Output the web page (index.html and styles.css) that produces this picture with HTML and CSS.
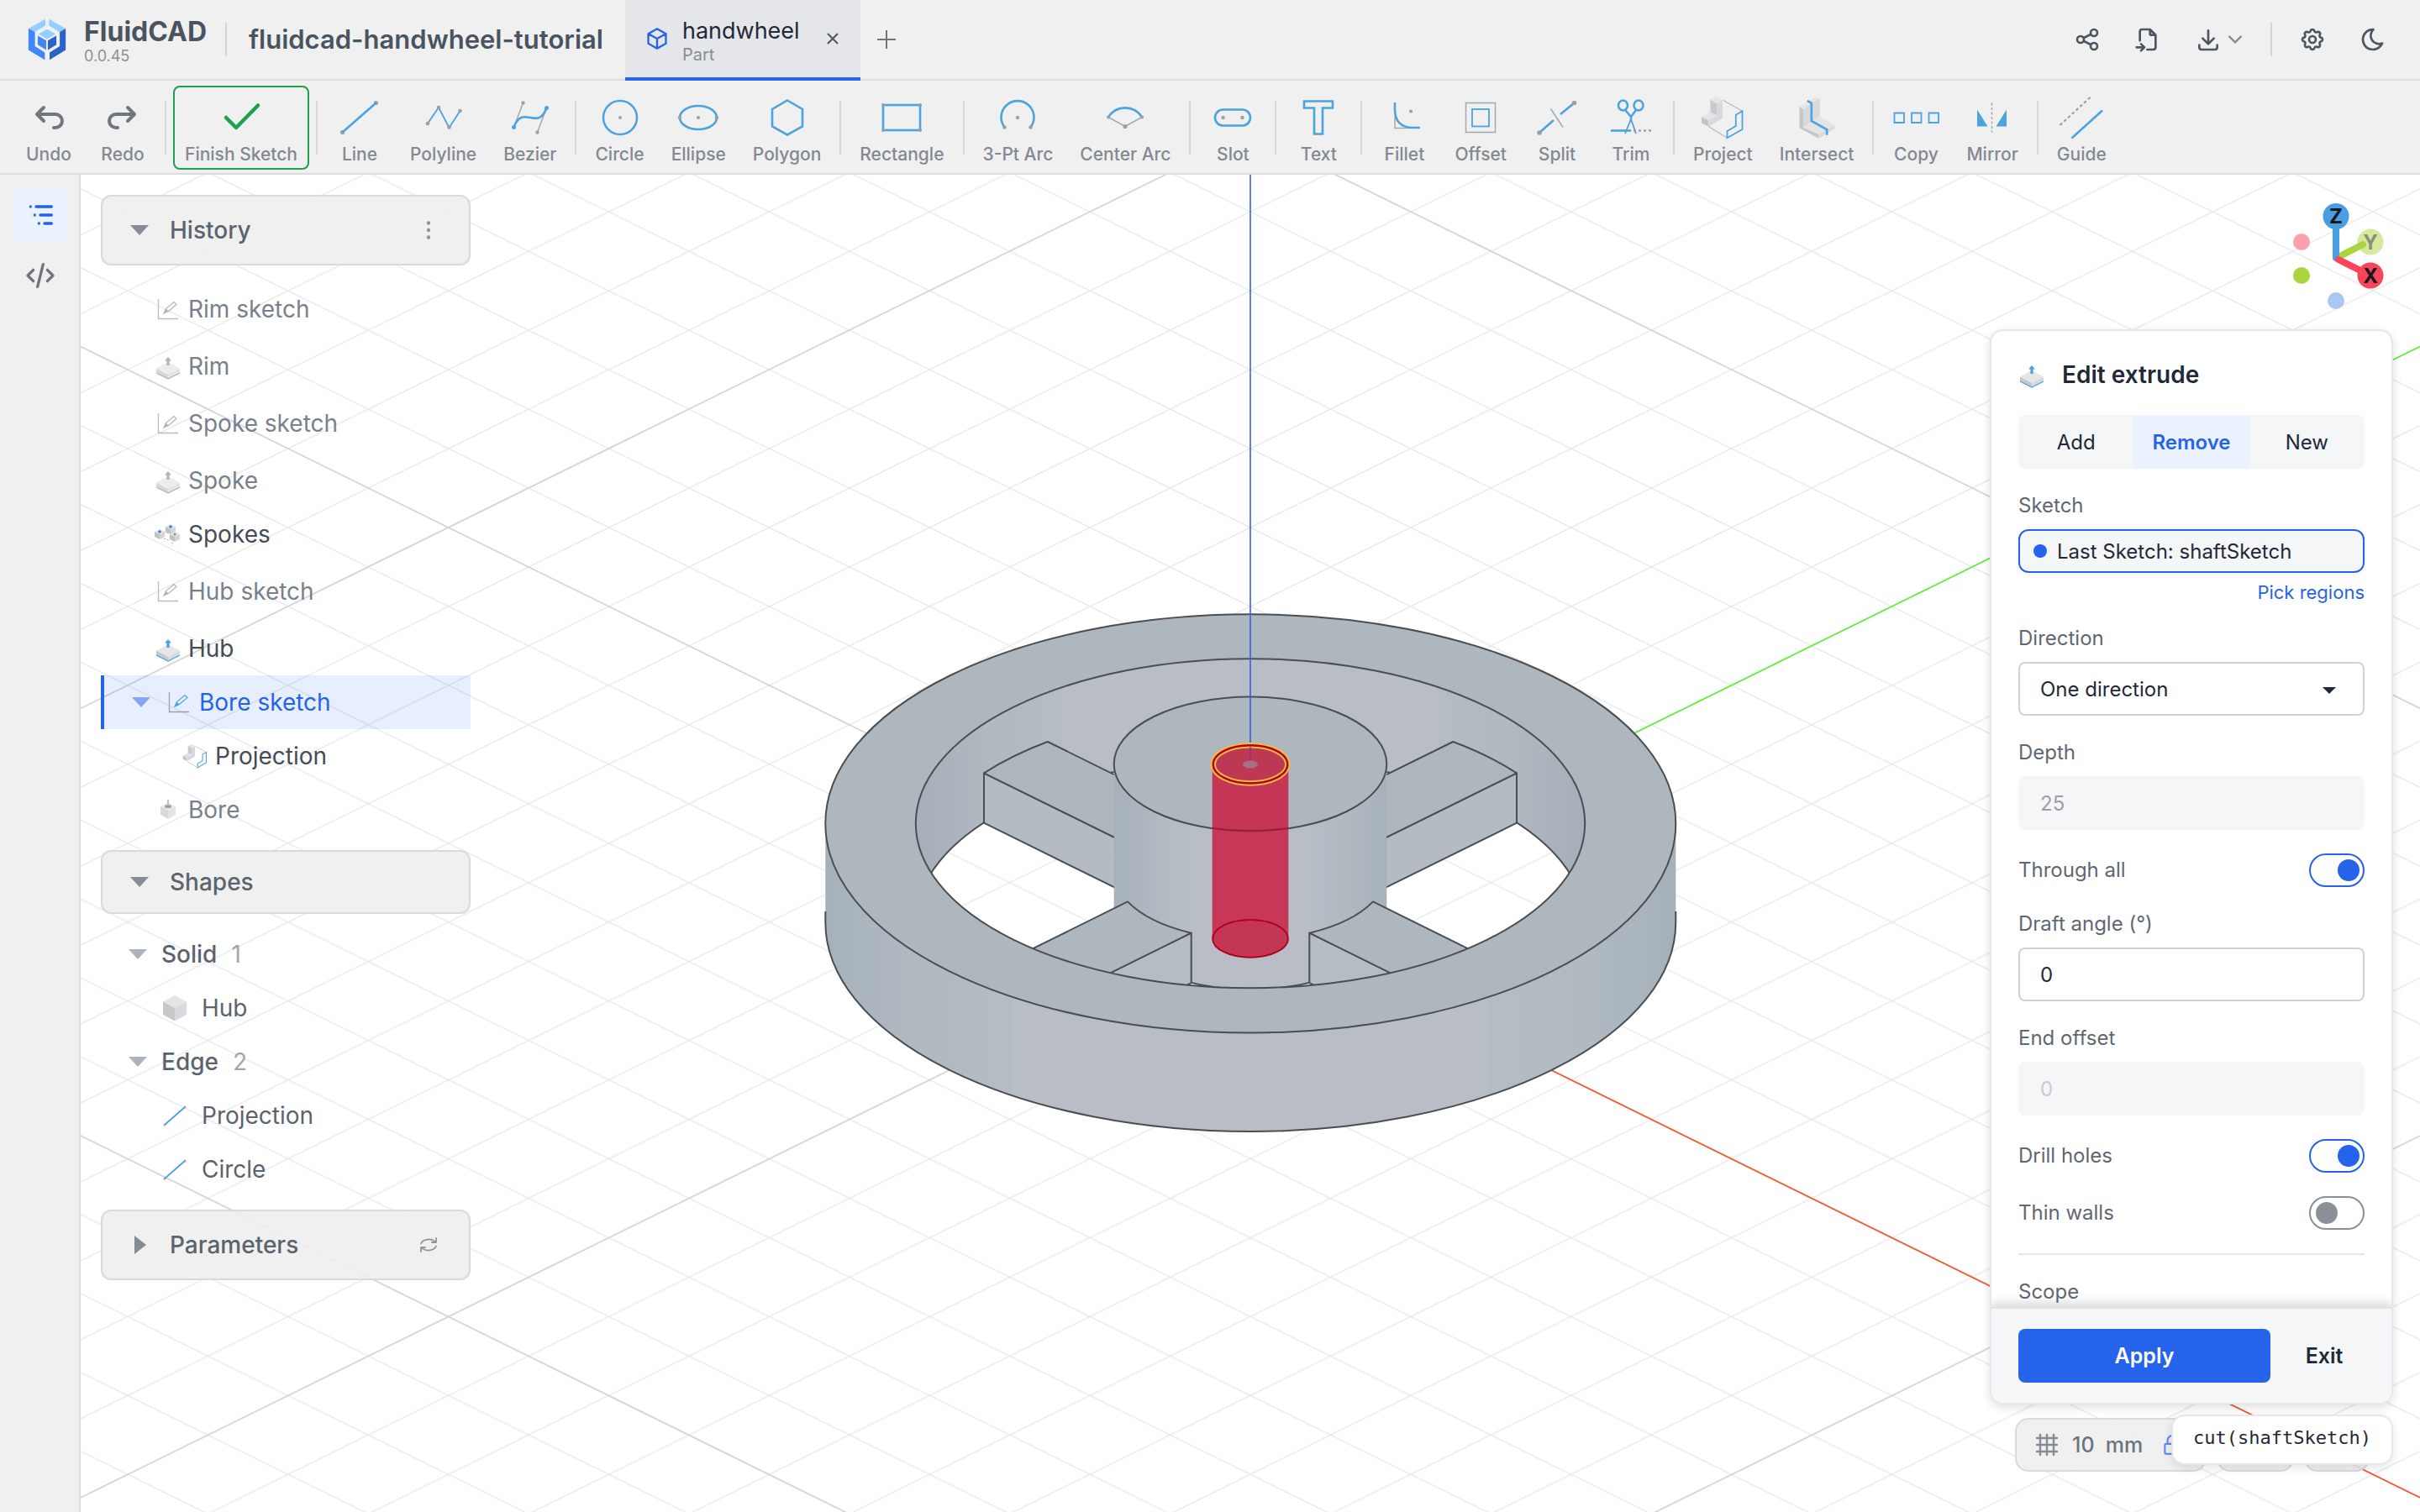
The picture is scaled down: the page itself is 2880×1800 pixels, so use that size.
FILE: index.html
```html
<!DOCTYPE html>
<html lang="en">
<head>
<meta charset="utf-8">
<title>FluidCAD - handwheel</title>
<link rel="stylesheet" href="styles.css">
</head>
<body>
<svg class="sprite" aria-hidden="true">
  <symbol id="i-extrude" viewBox="0 0 32 32">
    <path d="M2 18.500 16 11l14 7.500L16 26z" fill="#e6e6e7"/>
    <path d="M2 18.500 16 26v5L2 24z" fill="#c6c8c9"/>
    <path d="M30 18.500 16 26v5l14-7z" fill="#d9dadd"/>
    <path d="M2 24l14 7 14-7" fill="none" stroke="#4ba3e0" stroke-width="1.300"/>
    <path d="M16 5l4 4.500h-2.400V15h-3.200V9.500H12z" fill="#4ba3e0"/>
  </symbol>
  <symbol id="i-sketch" viewBox="0 0 32 32">
    <path d="M4.500 4v23.500H28" fill="none" stroke="#9aa0a8" stroke-width="1.300"/>
    <path d="M11 21l2.500-5.500 9.500-8 3 3-9.500 8z" fill="none" stroke="#4ba3e0" stroke-width="1.200"/>
    <path d="M11 21l2.500-5.500 3 3z" fill="#4ba3e0"/>
  </symbol>
  <symbol id="i-minicube" viewBox="0 0 12 14">
    <path d="M0 4l6-3 6 3-6 3z" fill="#e3e4e6"/><path d="M0 4l6 3v6l-6-3z" fill="#bfc2c5"/><path d="M12 4 6 7v6l6-3z" fill="#d3d5d8"/>
  </symbol>
  <symbol id="i-project" viewBox="0 0 56 56">
    <path d="M13.500 6.500 21 3l7 4.300-7 4z" fill="#e6e6e7"/>
    <path d="M13.500 6.500 21 11.300v14L13.500 22z" fill="#c8cacb"/>
    <path d="M3 27.300 13.500 21.500 21 25.300 11.500 31.500z" fill="#e3e4e5"/>
    <path d="M3 27.300 11.500 31.500v7.200L3 34.600z" fill="#c3c6c6"/>
    <path d="M28 7.300v21.400L11.500 38.700v-7.200L21 25.300v-14z" fill="#d8d9dc"/>
    <path d="M28.500 7.300l23 13M11.500 38.700l22 13.600" fill="none" stroke="#b5b8bc" stroke-width="1.200"/>
    <path d="M51.500 20.300V42l-18 10.300V44l10.300-6V24.700z" fill="none" stroke="#4ba3e0" stroke-width="1.800"/>
  </symbol>
  <symbol id="i-cube" viewBox="0 0 32 32">
    <path d="M2 8.500 16 1l14 7.500L16 16z" fill="#e3e4e5"/><path d="M2 8.500 16 16v15.500L2 24z" fill="#c6c8c9"/><path d="M30 8.500 16 16v15.500L30 24z" fill="#d9dadf"/>
  </symbol>
  <symbol id="i-edge" viewBox="0 0 32 32">
    <path d="M4 27 28 6" stroke="#4ba3e0" stroke-width="1.800"/><circle cx="4" cy="27" r="1.500" fill="#98a0aa"/><circle cx="28" cy="6" r="1.500" fill="#98a0aa"/>
  </symbol>
  <symbol id="i-down" viewBox="0 0 22 14"><path d="M0 1h22L11 13z" fill="currentColor"/></symbol>
</svg>

<header class="topbar">
  <a class="brand" href="#">
    <svg class="brand__logo" viewBox="100 69 136 149" aria-hidden="true">
      <path d="M162 71v23l-37 23-23-12zM175 71v23l37 23 22-12z" fill="#93ceff"/>
      <path d="M102 105l23 12v50l35 23v26l-58-35z" fill="#3f85fb"/>
      <path d="M234 105l-21 12v50l-36 23v26l57-35z" fill="#2763c8"/>
      <path d="M168 107l30 17-30 18-30-18z" fill="#93ceff"/>
      <path d="M135 130l30 17v34l-30-19z" fill="#3f85fb"/><path d="M201 130l-30 17v34l30-19z" fill="#2763c8"/>
    </svg>
    <span class="brand__text"><strong class="brand__name">FluidCAD</strong><span class="brand__version">0.0.45</span></span>
  </a>
  <span class="rule"></span>
  <h1 class="project">fluidcad-handwheel-tutorial</h1>
  <div class="tab">
    <svg class="tab__icon" viewBox="0 0 24 24" fill="none" stroke="currentColor" stroke-width="2" stroke-linejoin="round" stroke-linecap="round"><path d="M12 2l9 5v10l-9 5-9-5V7zM12 12l9-5M12 12v10M12 12L3 7"/></svg>
    <span class="tab__text"><span class="tab__name">handwheel</span><span class="tab__kind">Part</span></span>
    <button class="tab__close" aria-label="Close tab"><svg viewBox="0 0 14 14" fill="none" stroke="currentColor" stroke-width="2"><path d="M1 1l12 12M13 1L1 13"/></svg></button>
  </div>
  <button class="newtab" aria-label="New tab"><svg viewBox="0 0 22 22" fill="none" stroke="currentColor" stroke-width="2"><path d="M11 0v22M0 11h22"/></svg></button>
  <div class="actions">
    <button class="iconbtn" aria-label="Share"><svg viewBox="0 0 24 24"><path d="M3 12a3 3 0 1 0 6 0a3 3 0 1 0-6 0M15 6a3 3 0 1 0 6 0a3 3 0 1 0-6 0M15 18a3 3 0 1 0 6 0a3 3 0 1 0-6 0M8.700 10.700l6.600-3.400M8.700 13.300l6.600 3.400"/></svg></button>
    <button class="iconbtn" aria-label="Import"><svg viewBox="0 0 24 24"><path d="M14 3v4a1 1 0 0 0 1 1h4M5 13V5a2 2 0 0 1 2-2h7l5 5v11a2 2 0 0 1-2 2h-5.500M2 19h7M6 16l3 3-3 3"/></svg></button>
    <button class="iconbtn iconbtn--wide" aria-label="Export"><svg viewBox="0 0 24 24"><path d="M4 17v2a2 2 0 0 0 2 2h12a2 2 0 0 0 2-2v-2M7 11l5 5 5-5M12 4v12"/></svg><svg class="chev" viewBox="0 0 14 14"><path d="M1 4l6 6 6-6"/></svg></button>
    <span class="rule"></span>
    <button class="iconbtn" aria-label="Settings"><svg viewBox="0 0 24 24"><path d="M10.325 4.317c.426-1.756 2.924-1.756 3.350 0a1.724 1.724 0 0 0 2.573 1.066c1.543-.94 3.310.826 2.370 2.370a1.724 1.724 0 0 0 1.065 2.572c1.756.426 1.756 2.924 0 3.350a1.724 1.724 0 0 0-1.066 2.573c.94 1.543-.826 3.310-2.370 2.370a1.724 1.724 0 0 0-2.572 1.065c-.426 1.756-2.924 1.756-3.350 0a1.724 1.724 0 0 0-2.573-1.066c-1.543.94-3.310-.826-2.370-2.370a1.724 1.724 0 0 0-1.065-2.572c-1.756-.426-1.756-2.924 0-3.350a1.724 1.724 0 0 0 1.066-2.573c-.94-1.543.826-3.310 2.370-2.370c1 .608 2.296.07 2.572-1.065z"/><circle cx="12" cy="12" r="3"/></svg></button>
    <button class="iconbtn" aria-label="Dark mode"><svg viewBox="0 0 24 24"><path d="M12 3c.132 0 .263 0 .393 0a7.500 7.500 0 0 0 7.920 12.446a9 9 0 1 1-8.313-12.454z"/></svg></button>
  </div>
</header>

<nav class="toolbar" aria-label="Sketch tools">
  <button class="tool tool--plain"><svg viewBox="0 0 28 28"><g transform="translate(2 2)"><path d="M9 14l-4-4 4-4M5 10h11a4 4 0 1 1 0 8h-1"/></g></svg>Undo</button>
  <button class="tool tool--plain"><svg viewBox="0 0 28 28"><g transform="translate(2 2)"><path d="M15 14l4-4-4-4M19 10H8a4 4 0 1 0 0 8h1"/></g></svg>Redo</button>
  <span class="toolbar__sep"></span>
  <button class="tool tool--finish"><svg viewBox="0 0 56 56"><path d="M10 28l12 12 26-26.500" fill="none" stroke="#1aa34a" stroke-width="4.500" stroke-linecap="round" stroke-linejoin="round"/></svg>Finish Sketch</button>
  <span class="toolbar__sep"></span>
  <button class="tool"><svg viewBox="0 0 56 56"><g class="dots"><circle cx="7.500" cy="45.500" r="2.600"/><circle cx="47.500" cy="10.500" r="2.600"/></g><path class="b" d="M7.500 45.500l40-35"/></svg>Line</button>
  <button class="tool"><svg viewBox="0 0 56 56"><path class="b thin" d="M9 35l13-19 12.500 24L47.500 20"/><g class="dots"><circle cx="9" cy="35" r="2.300"/><circle cx="22" cy="16" r="2.300"/><circle cx="34.500" cy="39.500" r="2.300"/><circle cx="47.500" cy="20" r="2.300"/></g></svg>Polyline</button>
  <button class="tool"><svg viewBox="0 0 56 56"><path class="g" d="M8.500 39.500l11-29M36.500 45.500l11-29"/><path class="b" d="M8.500 39.500C19.500 10.500 36.500 45.500 47.500 16.500"/><g class="dots"><circle cx="19.500" cy="10.500" r="2.200"/><circle cx="36.500" cy="45.500" r="2.200"/></g><circle cx="8.500" cy="39.500" r="2.500" fill="#4ba3e0"/><circle cx="47.500" cy="16.500" r="2.500" fill="#4ba3e0"/></svg>Bezier</button>
  <span class="toolbar__sep"></span>
  <button class="tool"><svg viewBox="0 0 56 56"><circle class="b" cx="28" cy="28" r="20"/><g class="dots"><circle cx="28" cy="28" r="2"/></g></svg>Circle</button>
  <button class="tool"><svg viewBox="0 0 56 56"><ellipse class="b" cx="28" cy="28" rx="22" ry="14"/><g class="dots"><circle cx="28" cy="28" r="2"/><circle cx="6" cy="28" r="2.300"/><circle cx="50" cy="28" r="2.300"/></g></svg>Ellipse</button>
  <button class="tool"><svg viewBox="0 0 56 56"><path class="b" d="M28 7.500l18 10.500v20.500L28 48.500 10 38.500V18z"/></svg>Polygon</button>
  <span class="toolbar__sep"></span>
  <button class="tool"><svg viewBox="0 0 56 56"><rect class="b" x="6" y="13" width="44" height="30"/><g class="dots"><circle cx="6" cy="13" r="2"/><circle cx="50" cy="13" r="2"/><circle cx="6" cy="43" r="2"/><circle cx="50" cy="43" r="2"/></g></svg>Rectangle</button>
  <span class="toolbar__sep"></span>
  <button class="tool"><svg viewBox="0 0 56 56"><path class="b" d="M12.500 39.500a19.500 19.500 0 1 1 31 0"/><g class="dots"><circle cx="28" cy="28" r="2.200"/><circle cx="12.500" cy="39.500" r="2.200"/><circle cx="43.500" cy="39.500" r="2.200"/></g></svg>3-Pt Arc</button>
  <button class="tool"><svg viewBox="0 0 56 56"><path class="g" d="M8 27.500l20 11 20-11"/><path class="b" d="M8 27.500a23.500 23.500 0 0 1 40 0"/><g class="dots"><circle cx="28" cy="38.500" r="2.600"/><circle cx="8" cy="27.500" r="2"/><circle cx="48" cy="27.500" r="2"/></g></svg>Center Arc</button>
  <span class="toolbar__sep"></span>
  <button class="tool"><svg viewBox="0 0 56 56"><rect class="b" x="7" y="18.500" width="42" height="19" rx="9.500"/><g class="dots"><circle cx="16.500" cy="28" r="2.200"/><circle cx="39.500" cy="28" r="2.200"/></g></svg>Slot</button>
  <span class="toolbar__sep"></span>
  <button class="tool"><svg viewBox="0 0 56 56"><path class="b" d="M11 8.500h34v8H33v31H23v-31H11z"/></svg>Text</button>
  <span class="toolbar__sep"></span>
  <button class="tool"><svg viewBox="0 0 56 56"><path class="g" d="M17 26v14.500h18"/><path class="b" d="M17 10v8q0 22 22 22h8"/><g class="dots"><circle cx="36" cy="20.500" r="2"/></g></svg>Fillet</button>
  <button class="tool"><svg viewBox="0 0 56 56"><rect class="g" x="10.500" y="10.500" width="35" height="35"/><rect class="b thin" x="18" y="18" width="20" height="20.500"/></svg>Offset</button>
  <button class="tool"><svg viewBox="0 0 56 56"><path class="g" d="M20.500 17.500l14.500 22"/><path class="b" d="M7 46l17-15M32 24l16-13"/><g class="dots"><circle cx="7" cy="46" r="2.800"/><circle cx="48.500" cy="10.500" r="2.800"/></g></svg>Split</button>
  <button class="tool"><svg viewBox="0 0 56 56"><ellipse class="b" cx="18.500" cy="13.500" rx="5.500" ry="6"/><ellipse class="b" cx="37" cy="13.500" rx="5.500" ry="6"/><path class="b" d="M21 19l7 8 6-8M28 26v6"/><path class="b thin" d="M28 30l-7 17M28 30l6 17"/><path class="b" d="M4 43.500h24"/><path d="M31 43.500h22" stroke="#98a0aa" stroke-width="2.400" stroke-dasharray="3 3"/></svg>Trim</button>
  <span class="toolbar__sep"></span>
  <button class="tool"><svg viewBox="0 0 56 56"><use href="#i-project"/></svg>Project</button>
  <button class="tool"><svg viewBox="0 0 56 56"><path d="M7.500 14.700 26.800 3l5 2.300L11.800 18z" fill="#e6e6e7"/><path d="M11.800 18l20-12.700v21L11.800 39.700z" fill="#d8d9dc"/><path d="M11.800 39.700l20-13.400 17.700 11L30.200 48z" fill="#e3e4e5"/><path d="M7.500 14.700 11.800 18v21.700L30.200 48v4.700L7.500 40.300z" fill="#c3c6c6"/><path d="M30.200 48l19.300-10.700v4L30.200 52.700z" fill="#d8d9dc"/><path class="b" d="M16.800 8l5 2.700V32l18.400 10.300v6.400"/></svg>Intersect</button>
  <span class="toolbar__sep"></span>
  <button class="tool"><svg viewBox="0 0 56 56"><path class="b thin" d="M2.500 22.500h11.500V34H2.500zM23 22.500h11.500V34H23zM43.500 22.500H55V34H43.500z"/></svg>Copy</button>
  <button class="tool"><svg viewBox="0 0 56 56"><path d="M10 18.500v20h12.500zM45 18.500v20H32.500z" fill="#4ba3e0"/><path class="g" d="M27.500 10.500v35" stroke-dasharray="3 2.500"/></svg>Mirror</button>
  <span class="toolbar__sep"></span>
  <button class="tool"><svg viewBox="0 0 56 56"><path d="M2.500 37 39.500 3" fill="none" stroke="#98a0aa" stroke-width="2.200" stroke-dasharray="3.500 3"/><path class="b" d="M16.500 52.500 53 19.500"/></svg>Guide</button>
</nav>

<main class="workspace">
  <nav class="rail" aria-label="Panels">
    <button class="rail__btn rail__btn--on" aria-label="Model tree"><svg viewBox="0 0 24 24"><path d="M9 6h11M12 12h8M15 18h5M5 6v.01M8 12v.01M11 18v.01"/></svg></button>
    <button class="rail__btn" aria-label="Code"><svg viewBox="0 0 24 24"><path d="M7 8l-4 4 4 4M17 8l4 4-4 4M14 4l-4 16"/></svg></button>
  </nav>

  <section class="stage" aria-label="3D view">
    <svg class="scene" viewBox="96 208 2784 1592" preserveAspectRatio="xMidYMid slice">
      <defs>
        <pattern id="grid" patternUnits="userSpaceOnUse" x="1488" y="1097.700" width="190.860" height="93.940">
          <path d="M-19.086-9.394 209.946 103.334M-19.086 103.334 209.946-9.394M171.774-9.394 209.946 9.394M-19.086 84.546 19.086 103.334M-19.086 9.394 19.086-9.394M171.774 103.334 209.946 84.546" stroke="#e9e9ea" stroke-width="1.500" fill="none"/>
        </pattern>
        <linearGradient id="outer" gradientUnits="userSpaceOnUse" x1="982" x2="1994" y1="0" y2="0">
          <stop offset="0" stop-color="#a5b0ba"/><stop offset=".04" stop-color="#abb5bd"/><stop offset=".1" stop-color="#b0b8c0"/><stop offset=".22" stop-color="#b5bcc4"/><stop offset=".22" stop-color="#b9bdc6"/><stop offset=".78" stop-color="#b9bdc6"/><stop offset=".78" stop-color="#b5bdc4"/><stop offset=".9" stop-color="#b2bac1"/><stop offset=".92" stop-color="#adb7bf"/><stop offset="1" stop-color="#a5b0ba"/>
        </linearGradient>
        <linearGradient id="inner" gradientUnits="userSpaceOnUse" x1="1090" x2="1886" y1="0" y2="0">
          <stop offset="0" stop-color="#a5afb9"/><stop offset=".1" stop-color="#b0b8c0"/><stop offset=".22" stop-color="#b5bcc4"/><stop offset=".22" stop-color="#b9bdc6"/><stop offset=".78" stop-color="#b9bdc6"/><stop offset=".78" stop-color="#b5bdc4"/><stop offset=".9" stop-color="#b0b8c0"/><stop offset="1" stop-color="#a5afb9"/>
        </linearGradient>
        <linearGradient id="hub" gradientUnits="userSpaceOnUse" x1="1326" x2="1650" y1="0" y2="0">
          <stop offset="0" stop-color="#a7b1ba"/><stop offset=".2" stop-color="#b3bbc3"/><stop offset=".3" stop-color="#b8bdc6"/><stop offset=".7" stop-color="#b8bdc6"/><stop offset=".85" stop-color="#b1b9c1"/><stop offset="1" stop-color="#a7b1ba"/>
        </linearGradient>
        <clipPath id="opening"><ellipse cx="1488" cy="980.200" rx="398.200" ry="196"/></clipPath>
      </defs>
      <rect x="96" y="208" width="2784" height="1592" fill="#fff"/>
      <rect x="96" y="208" width="2784" height="1592" fill="url(#grid)"/>
      <g stroke="#d4d5d6" stroke-width="1.600" fill="none">
        <path d="M96 412.500 1488 1097.700 68 1796.700"/>
        <path d="M96 843.300 1693 57.200M1386 107.800 2880 843.200M1488 2037.400 2880 1352.200M1488 2037.400 0 1304.900"/>
      </g>
      <path d="M1488 1097.700 2912 1798.600" stroke="#f2592f" stroke-width="1.800"/>
      <path d="M1488 1097.700 2880 412.500" stroke="#62f03a" stroke-width="1.800"/>

      <g stroke="#4b4e51" stroke-width="2" stroke-linejoin="round">
        <path d="M982.300 980.400v117.500a506 249.100 0 0 0 1012 0V980.400z" fill="url(#outer)" stroke="none"/>
        <path d="M982.300 1085v12.900a506 249.100 0 0 0 1012 0V1085" fill="none"/>
        <ellipse cx="1488.300" cy="980.400" rx="506" ry="249.100" fill="#afb7be"/>
        <g clip-path="url(#opening)">
          <rect x="1080" y="770" width="820" height="420" fill="url(#inner)" stroke="none"/>
          <ellipse cx="1488" cy="1098" rx="398.200" ry="196" fill="#fff"/>
          <ellipse cx="1488" cy="1098" rx="397" ry="195" fill="url(#grid)" stroke="none"/>
          <path d="M1171 920.300v59.400L1400 1092.700V1033.300z" fill="#b4bbc2"/>
          <path d="M1171 920.300Q1204 899 1246.700 883L1400 958.600v74.700z" fill="#afb7be"/>
          <path d="M1805 920.300v59.400L1576 1092.700V1033.300z" fill="#b4bbc2"/>
          <path d="M1805 920.300Q1772 899 1729.300 883L1576 958.600v74.700z" fill="#afb7be"/>
          <path d="M1325.700 909.500V1098a162.300 79.900 0 0 0 324.600 0V909.500z" fill="url(#hub)" stroke="none"/>
          <path d="M1325.700 1098a162.300 79.900 0 0 0 324.600 0" fill="none"/>
          <path d="M1417.700 1110.700v59.400L1290 1233V1173z" fill="#b6bcc4"/>
          <path d="M1342 1073.400A162.300 79.900 0 0 0 1417.700 1110.700L1290 1173.800 1180 1153.500z" fill="#afb7be"/>
          <path d="M1558.300 1110.700v59.400L1686 1233V1173z" fill="#b6bcc4"/>
          <path d="M1634 1073.400A162.300 79.900 0 0 1 1558.300 1110.700L1686 1173.800 1796 1153.500z" fill="#afb7be"/>
        </g>
        <ellipse cx="1488" cy="980.200" rx="398.200" ry="196" fill="none"/>
        <ellipse cx="1488" cy="909.500" rx="162.300" ry="79.900" fill="#afb7be"/>
      </g>
      <path d="M1488 208v702" stroke="#3f5bea" stroke-width="1.600"/>
      <path d="M1442.700 909.900v207.500a45.300 22.300 0 0 0 90.600 0V909.900z" fill="#c91a40" fill-opacity=".82"/>
      <ellipse cx="1488" cy="909.900" rx="45.300" ry="22.300" fill="#bd3853"/>
      <path d="M1443 986q45 6 90 0" fill="none" stroke="#8f2036" stroke-width="1.600"/>
      <ellipse cx="1488" cy="1117.400" rx="44.800" ry="22.300" fill="#c33754" stroke="#b3001f" stroke-width="2"/>
      <ellipse cx="1488" cy="909.900" rx="44.300" ry="22.600" fill="none" stroke="#edbb3e" stroke-width="6.500"/>
      <ellipse cx="1488" cy="909.900" rx="44.300" ry="22.600" fill="none" stroke="#b3001f" stroke-width="2.400"/>
      <path d="M1488 888v22" stroke="#7c3a8f" stroke-width="1.400"/>
      <ellipse cx="1488" cy="910" rx="9" ry="4.500" fill="#a87086"/>
    </svg>

    <div class="overlay">
      <aside class="side">
        <h2 class="panelhead"><svg class="caret"><use href="#i-down"/></svg>History<button class="panelhead__btn" aria-label="History menu"><svg viewBox="0 0 24 24" fill="currentColor"><circle cx="12" cy="3.500" r="2.200"/><circle cx="12" cy="12" r="2.200"/><circle cx="12" cy="20.500" r="2.200"/></svg></button></h2>
        <ul class="tree tree--history">
          <li class="row row--dim row--spaced"><svg class="ico"><use href="#i-sketch"/></svg>Rim sketch</li>
          <li class="row row--dim row--spaced"><svg class="ico"><use href="#i-extrude"/></svg>Rim</li>
          <li class="row row--dim row--spaced"><svg class="ico"><use href="#i-sketch"/></svg>Spoke sketch</li>
          <li class="row row--dim"><svg class="ico"><use href="#i-extrude"/></svg>Spoke</li>
          <li class="row row--spaced"><svg class="ico" viewBox="0 0 32 32"><path d="M7 12l14 4v14M7 20l10 3 6-6" fill="none" stroke="#a5aab0" stroke-width="1" stroke-dasharray="2 2"/><use href="#i-minicube" x="0" y="9" width="12" height="14"/><use href="#i-minicube" x="13" y="3" width="12" height="14"/><use href="#i-minicube" x="18" y="12" width="12" height="14"/><circle cx="6" cy="13" r="1.800" fill="#3f7fd0"/><circle cx="19" cy="7" r="1.800" fill="#3f7fd0"/><circle cx="24" cy="16" r="1.500" fill="#8c9299"/></svg>Spokes</li>
          <li class="row row--dim row--spaced"><svg class="ico"><use href="#i-sketch"/></svg>Hub sketch</li>
          <li class="row"><svg class="ico"><use href="#i-extrude"/></svg>Hub</li>
          <li class="row row--active"><svg class="caret"><use href="#i-down"/></svg><svg class="ico"><use href="#i-sketch"/></svg>Bore sketch</li>
          <li class="row row--child"><svg class="ico"><use href="#i-project"/></svg>Projection</li>
          <li class="row row--dim"><svg class="ico" viewBox="0 0 32 32"><path d="M7 12l9-4.500 9 4.500-9 4.500z" fill="#e0e1e3"/><path d="M7 12l9 4.500V27l-9-5z" fill="#c8cacc"/><path d="M25 12l-9 4.500V27l9-5z" fill="#d6d8da"/><ellipse cx="16" cy="12" rx="4" ry="2" fill="#70767d"/><path d="M16 4v8" stroke="#8c9299" stroke-width="1.600"/></svg>Bore</li>
        </ul>
        <h2 class="panelhead panelhead--short"><svg class="caret"><use href="#i-down"/></svg>Shapes</h2>
        <ul class="tree">
          <li class="row row--group"><svg class="caret"><use href="#i-down"/></svg>Solid<span class="count">1</span></li>
          <li class="row row--item"><svg class="ico"><use href="#i-cube"/></svg>Hub</li>
          <li class="row row--group"><svg class="caret"><use href="#i-down"/></svg>Edge<span class="count">2</span></li>
          <li class="row row--item"><svg class="ico"><use href="#i-edge"/></svg>Projection</li>
          <li class="row row--item"><svg class="ico"><use href="#i-edge"/></svg>Circle</li>
        </ul>
        <h2 class="panelhead"><svg class="caret" viewBox="0 0 22 22"><path d="M5 0l14 11L5 22z" fill="currentColor"/></svg>Parameters<button class="panelhead__btn" aria-label="Refresh"><svg viewBox="0 0 24 24" fill="none" stroke="currentColor" stroke-width="1.800" stroke-linecap="round" stroke-linejoin="round"><path d="M3 10.500C5 5.500 15 3 20.500 9M21 4v5h-5M21 13.500C19 18.500 9 21 3.500 15M3 20v-5h5"/></svg></button></h2>
      </aside>

      <div class="right">
        <svg class="gizmo" viewBox="2720 208 120 184" aria-label="View axes">
          <circle cx="2739" cy="288" r="10" fill="#fda0ab"/><circle cx="2739" cy="328" r="10" fill="#aad53f"/><circle cx="2780" cy="358" r="10" fill="#a6c8f3"/>
          <circle cx="2821" cy="288" r="15.500" fill="#d6ea9f"/>
          <g stroke-width="8" stroke-linecap="round"><path d="M2781 307l31-16" stroke="#aad53f"/><path d="M2780 307v-40" stroke="#479ee2"/><path d="M2783 309l34 17" stroke="#f94459"/></g>
          <circle cx="2780" cy="257.500" r="15.500" fill="#479ee2"/><circle cx="2821" cy="328" r="15.500" fill="#f94459"/>
          <g class="gizmo__text"><text x="2780" y="266">Z</text><text class="gizmo__far" x="2821" y="297">Y</text><text x="2821" y="337">X</text></g>
        </svg>
        <form class="editor">
          <div class="editor__body">
            <h2 class="editor__title"><svg class="ico"><use href="#i-extrude"/></svg>Edit extrude</h2>
            <div class="segments"><button type="button">Add</button><button type="button" class="on">Remove</button><button type="button">New</button></div>
            <div class="field">
              <label for="pick">Sketch</label>
              <button type="button" id="pick" class="picker"><span class="picker__dot"></span>Last Sketch: shaftSketch</button>
              <a class="regions" href="#">Pick regions</a>
            </div>
            <div class="field">
              <label for="dir">Direction</label>
              <div class="selectwrap"><select id="dir" class="input"><option>One direction</option></select><svg class="selectwrap__caret" viewBox="0 0 16 8"><path d="M0 0h16L8 8z" fill="#1f2937"/></svg></div>
            </div>
            <div class="field"><label for="depth">Depth</label><input id="depth" class="input" value="25" disabled></div>
            <div class="switch"><label for="thru">Through all</label><input id="thru" type="checkbox" checked></div>
            <div class="field"><label for="draft">Draft angle (°)</label><input id="draft" class="input" value="0"></div>
            <div class="field"><label for="end">End offset</label><input id="end" class="input input--faint" value="0" disabled></div>
            <div class="switch"><label for="drill">Drill holes</label><input id="drill" type="checkbox" checked></div>
            <div class="switch"><label for="thin">Thin walls</label><input id="thin" type="checkbox"></div>
            <hr>
            <div class="field"><span class="label">Scope</span></div>
          </div>
          <div class="editor__foot"><button type="button" class="apply">Apply</button><button type="button" class="exit">Exit</button></div>
        </form>
        <div class="status">
          <div class="chip chip--units">
            <svg viewBox="0 0 28 28" fill="none" stroke="#868c95" stroke-width="2.400" stroke-linecap="round"><path d="M6 2v24M14 2v24M22 2v24M2 6h24M2 14h24M2 22h24"/></svg>
            <span class="units">10&nbsp; mm</span>
            <svg class="lock" viewBox="0 0 24 24" fill="none" stroke="#5b8def" stroke-width="2"><rect x="4" y="11" width="16" height="11" rx="2"/><path d="M7 11V7a5 5 0 0 1 10 0"/></svg>
          </div>
          <div class="chip chip--view"></div>
          <div class="chip chip--fit"></div>
          <code class="preview">cut(shaftSketch)</code>
        </div>
      </div>
    </div>
  </section>
</main>
</body>
</html>
```

FILE: styles.css
```css
* { box-sizing: border-box; }
body { margin: 0; height: 100vh; display: flex; flex-direction: column; background: #f0f0f0; color: #4b5563; font-family: Inter, "Liberation Sans", sans-serif; font-size: 28px; }
button { font: inherit; color: inherit; background: none; border: 0; padding: 0; cursor: pointer; }
h1, h2, ul { margin: 0; padding: 0; font-size: inherit; list-style: none; }
.sprite { position: absolute; width: 0; height: 0; }
svg { flex: none; display: block; }

/* header */
.topbar { flex: none; display: flex; align-items: center; height: 96px; border-bottom: 2px solid #dcdcdd; padding-left: 32px; padding-right: 24px; }
.brand { display: flex; align-items: center; gap: 20px; color: inherit; text-decoration: none; padding-right: 22px; }
.brand__logo { width: 48px; height: 50px; }
.brand__text { display: flex; flex-direction: column; padding-top: 4px; }
.brand__name { font-size: 32px; line-height: 36px; font-weight: 700; color: #4a5360; }
.brand__version { font-size: 18px; line-height: 22px; color: #8b9098; }
.rule { width: 2px; height: 40px; background: #d3d4d6; }
.project { margin-left: 26px; margin-right: 26px; font-size: 31px; line-height: 40px; font-weight: 600; color: #4a5360; }
.tab { align-self: stretch; margin-bottom: -2px; width: 280px; display: flex; align-items: center; padding: 0 22px 0 24px; background: #e5e6ea; border-bottom: 4px solid #2563eb; }
.tab__icon { width: 28px; height: 28px; color: #2563eb; margin-right: 16px; }
.tab__text { display: flex; flex-direction: column; flex: 1; padding-top: 8px; }
.tab__name { font-size: 27px; line-height: 30px; color: #1f2937; }
.tab__kind { font-size: 20px; line-height: 26px; color: #868c95; }
.tab__close svg { width: 14px; height: 14px; margin-right: 4px; }
.newtab { padding: 0 20px; color: #6f757d; }
.newtab svg { width: 22px; height: 22px; }
.actions { margin-left: auto; display: flex; align-items: center; gap: 8px; }
.actions .rule { margin: 0 8px 0 6px; }
.iconbtn { height: 64px; min-width: 64px; display: flex; align-items: center; justify-content: center; color: #4b5563; }
.iconbtn svg { width: 32px; height: 32px; fill: none; stroke: currentColor; stroke-width: 2; stroke-linecap: round; stroke-linejoin: round; }
.iconbtn--wide { gap: 8px; padding: 0 20px 0 16px; }
.iconbtn .chev { width: 16px; height: 16px; color: #868c95; }

/* toolbar */
.toolbar { flex: none; display: flex; align-items: center; gap: 4px; height: 112px; padding: 2px 16px 0; border-bottom: 2px solid #dcdcdd; }
.tool { display: flex; flex-direction: column; align-items: center; gap: 4px; height: 100px; padding: 8px 12px; border: 2px solid transparent; border-radius: 8px; font-size: 21px; line-height: 24px; font-weight: 500; color: #838991; white-space: nowrap; }
.tool svg { width: 56px; height: 56px; fill: none; }
.tool--plain svg { stroke: #6f767e; stroke-width: 2; stroke-linecap: round; stroke-linejoin: round; }
.tool--finish { border-color: #1aa34a; }
.tool .b { fill: none; stroke: #4ba3e0; stroke-width: 2.6px; }
.tool .thin { stroke-width: 1.8px; }
.tool .g { fill: none; stroke: #a2a8b0; stroke-width: 1.5px; }
.tool .dots { fill: #98a0aa; }
.toolbar__sep { width: 2px; height: 64px; margin: 0 4px; background: #d6d7da; }

/* workspace */
.workspace { flex: 1; display: flex; min-height: 0; }
.rail { width: 96px; padding: 16px 0 0 16px; border-right: 2px solid #dcdcdd; display: flex; flex-direction: column; gap: 8px; }
.rail__btn { width: 64px; height: 64px; border-radius: 12px; display: flex; align-items: center; justify-content: center; color: #6f767e; }
.rail__btn svg { width: 40px; height: 40px; fill: none; stroke: currentColor; stroke-width: 2; stroke-linecap: round; stroke-linejoin: round; }
.rail__btn--on { background: #ebf2ff; color: #2563eb; }
.stage { flex: 1; position: relative; overflow: hidden; }
.scene { position: absolute; inset: 0; width: 100%; height: 100%; }
.overlay { position: relative; height: 100%; display: flex; justify-content: space-between; padding: 0 32px 0 24px; }

/* left panels */
.side { width: 440px; padding-top: 24px; }
.panelhead { height: 84px; display: flex; align-items: center; padding: 0 32px 0 33px; border: 2px solid #dadada; border-radius: 12px; background: rgba(238, 238, 238, 0.88); color: #5b636e; font-size: 28px; font-weight: 500; }
.panelhead--short { height: 76px; }
.panelhead .caret { color: #868c95; margin-right: 25px; }
.panelhead__btn { margin-left: auto; margin-right: 4px; color: #8f959d; }
.panelhead__btn svg { width: 24px; height: 24px; }
.caret { width: 22px; height: 22px; }
.tree { padding: 16px 0; }
.tree--history { padding-top: 20px; }
.row { height: 64px; display: flex; align-items: center; padding-left: 64px; gap: 8px; color: #434c58; font-size: 28px; }
.row--spaced { margin-bottom: 4px; }
.row--dim { color: #78818b; }
.row--dim .ico { filter: grayscale(1); opacity: 0.7; }
.ico { width: 32px; height: 32px; }
.row--active { padding-left: 33px; gap: 18px; border-left: 4px solid #2563eb; background: rgba(37, 99, 235, 0.11); color: #2563eb; }
.row--active .caret { opacity: 0.5; }
.row--active .ico { margin-right: -10px; }
.row--child { padding-left: 96px; }
.row--group { padding-left: 33px; gap: 17px; color: #5b636e; font-weight: 500; }
.row--group .caret { color: #adb3bb; }
.row--item { padding-left: 72px; gap: 16px; color: #5b636e; }
.count { color: #a3a7ad; font-weight: 400; }

/* right column */
.right { width: 480px; display: flex; flex-direction: column; padding-bottom: 48px; }
.gizmo { width: 120px; height: 184px; align-self: flex-end; margin-right: 8px; }
.gizmo__text { font-size: 24px; font-weight: 700; text-anchor: middle; fill: #14181c; }
.gizmo__far { fill: #8a8f7c; }
.editor { flex: 1; min-height: 0; display: flex; flex-direction: column; border: 2px solid #e5e7eb; border-radius: 16px; background: #fff; overflow: hidden; box-shadow: 0 4px 12px rgba(0, 0, 0, 0.12); }
.editor__body { flex: 1; min-height: 0; overflow: hidden; padding: 32px; display: flex; flex-direction: column; gap: 28px; font-size: 24px; }
.editor__body > * { flex: none; }
.editor__title { display: flex; align-items: center; gap: 20px; line-height: 40px; font-size: 28px; font-weight: 600; color: #1f2937; }
.segments { display: flex; height: 64px; border-radius: 8px; background: #f4f6f8; overflow: hidden; color: #1f2937; }
.segments button { flex: 1 1 0; }
.segments .on { background: #ebf2ff; color: #2563eb; font-weight: 600; }
.field { display: flex; flex-direction: column; gap: 12px; }
label, .label { line-height: 32px; color: #5f6772; }
.picker { height: 52px; display: flex; align-items: center; gap: 12px; padding: 0 16px; border: 2px solid #2563eb; border-radius: 12px; background: #f4f6f8; color: #1f2937; }
.picker__dot { width: 16px; height: 16px; border-radius: 50%; background: #2563eb; }
.regions { align-self: flex-end; font-size: 22px; line-height: 22px; color: #2563eb; text-decoration: none; }
.input { width: 100%; height: 64px; padding: 0 24px; font: inherit; color: #1f2937; background: #fff; border: 2px solid #d2d2d3; border-radius: 8px; appearance: none; }
.input:disabled { background: #f4f6f8; border-color: #f4f6f8; color: #9ca1a7; }
.input--faint:disabled { color: #c9ccd0; }
.selectwrap { position: relative; }
.selectwrap__caret { position: absolute; right: 34px; top: 30px; width: 16px; height: 8px; }
.switch { display: flex; align-items: center; justify-content: space-between; height: 40px; }
.switch input { appearance: none; margin: 0; width: 66px; height: 40px; padding: 5px 6px; border: 2px solid #8b9098; border-radius: 20px; color: #8b9098; display: flex; }
.switch input::before { content: ""; width: 26px; height: 26px; border-radius: 50%; background: currentColor; }
.switch input:checked { border-color: #2563eb; color: #2563eb; justify-content: flex-end; padding-right: 4px; }
hr { width: 100%; height: 2px; margin: 0; border: 0; background: #e5e7eb; }
.editor__foot { position: relative; display: flex; gap: 16px; padding: 24px 32px; border-top: 2px solid #e0e2e5; background: #f6f7f9; box-shadow: 0 -4px 12px rgba(0, 0, 0, 0.18); font-size: 25px; font-weight: 600; }
.apply { flex: 1; height: 64px; border-radius: 8px; background: #2563eb; color: #fff; }
.exit { width: 96px; color: #1f2937; }

/* status strip */
.status { flex: none; position: relative; height: 64px; margin: 16px 28px 0 30px; display: flex; gap: 12px; }
.chip { border: 2px solid #dadada; border-radius: 16px; background: rgba(238, 238, 238, 0.88); display: flex; align-items: center; }
.chip--units { width: 228px; padding-left: 22px; gap: 16px; font-size: 25px; color: #6b7280; font-weight: 500; }
.chip--units svg { width: 28px; height: 28px; }
.chip .lock { margin-left: 6px; width: 26px; height: 26px; }
.chip--view { width: 92px; }
.chip--fit { width: 78px; }
.preview { position: absolute; right: -28px; top: -4px; height: 60px; padding: 0 24px; border: 2px solid #e5e7eb; border-radius: 16px; background: #fff; box-shadow: 0 4px 12px rgba(0, 0, 0, 0.1); font-family: "DejaVu Sans Mono", monospace; font-size: 22px; line-height: 52px; color: #1f2937; }
```
